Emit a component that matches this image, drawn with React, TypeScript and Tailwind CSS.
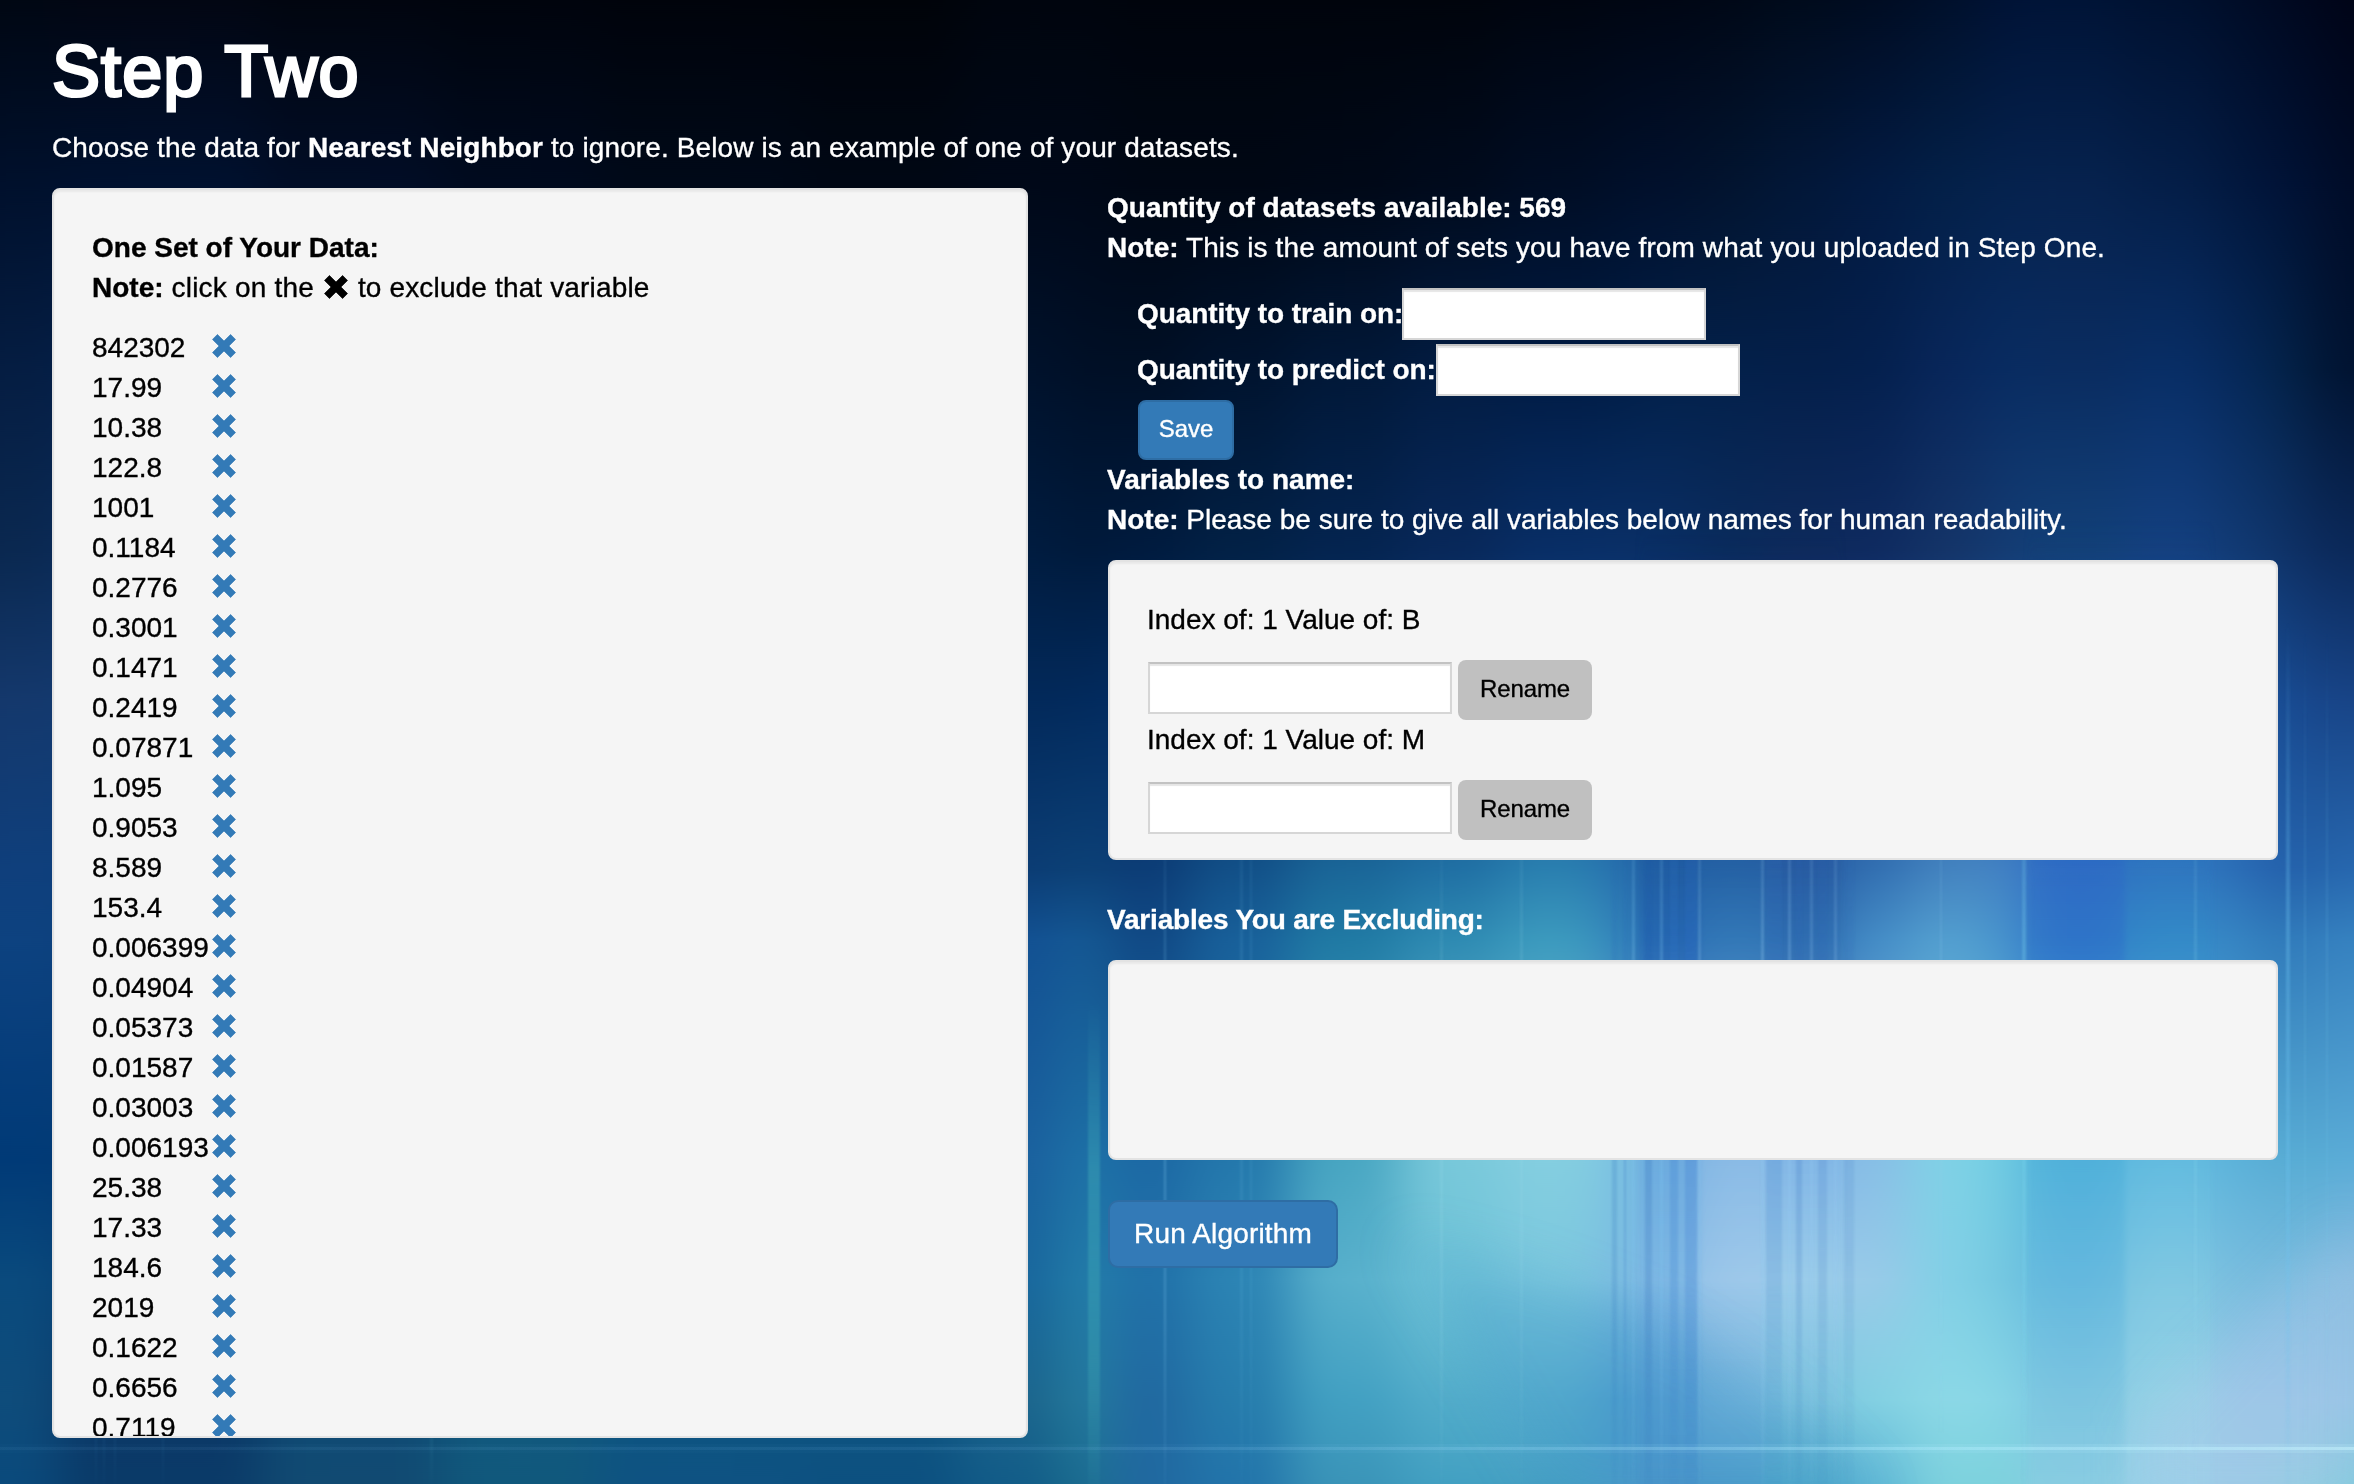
import React from "react";

const STOPS = [0, 185, 370, 550, 700, 870, 940, 1160, 1280, 1400, 1484];

// Wallpaper colour ramps: [left edge, colours from top to bottom at STOPS]
const RAMPS: [number, string[]][] = [
  [-60, ["#000713", "#00102c", "#051d42", "#0a2850", "#14386c", "#0f3f7c", "#0d4280", "#003a77", "#0a4a7d", "#0e4c7b", "#0a4a7c"]],
  [60, ["#020613", "#00112f", "#03204a", "#0a2c5c", "#123a70", "#0d3f7c", "#0c407c", "#033a74", "#073e72", "#0b3766", "#0a3a68"]],
  [260, ["#01050f", "#010d26", "#03204a", "#0a2c5c", "#123a70", "#0d3f7c", "#0c407c", "#033a74", "#0a4472", "#0e4a74", "#114a72"]],
  [440, ["#00040d", "#000a1e", "#03204a", "#0a2c5c", "#123a70", "#0d3f7c", "#0c407c", "#033a74", "#0a4c78", "#12597e", "#10587c"]],
  [600, ["#00030b", "#000918", "#021a3c", "#052552", "#0d3468", "#0d3f7c", "#0c4880", "#0a5088", "#0a5080", "#0c5480", "#0e5282"]],
  [800, ["#000309", "#000714", "#01142e", "#031e48", "#062c60", "#0d4280", "#105088", "#145a90", "#145a8c", "#0e5480", "#0c5080"]],
  [960, ["#00050e", "#000818", "#00122c", "#001c40", "#02295a", "#0b3c74", "#125092", "#1a609e", "#18669c", "#1b648c", "#125c88"]],
  [1060, ["#00050e", "#000818", "#000f26", "#00193a", "#022a5c", "#0c4277", "#155a94", "#1e74a8", "#2480aa", "#257d9f", "#1c7090"]],
  [1110, ["#00040c", "#000714", "#000f25", "#001b3f", "#032c62", "#0c3c76", "#104884", "#1c68a4", "#2070a8", "#2068a0", "#2068a0"]],
  [1190, ["#00040c", "#000714", "#00132e", "#022146", "#053264", "#125088", "#18609a", "#2478ac", "#2c84b4", "#267cac", "#2274aa"]],
  [1290, ["#00040c", "#000817", "#011838", "#042450", "#083a70", "#1a6698", "#207aa4", "#48a6c2", "#58b0cc", "#42a0c2", "#3a94b8"]],
  [1400, ["#00040c", "#000a1c", "#021c42", "#08285a", "#104480", "#2070a4", "#2e8ab2", "#78c8da", "#70c4d8", "#52acca", "#42a0c2"]],
  [1500, ["#000510", "#000d24", "#001b44", "#082e66", "#144c90", "#2a80b0", "#3c9abe", "#84cee0", "#7cc8de", "#58aece", "#46a0c4"]],
  [1600, ["#000613", "#000f2a", "#001d46", "#0a3068", "#144c94", "#2870b0", "#3484bc", "#7cc2e2", "#7cbce2", "#4c9cce", "#4c9cca"]],
  [1640, ["#000614", "#01102c", "#02204a", "#0a2e64", "#123f88", "#205ca2", "#2464b0", "#6aa8de", "#7cb6e4", "#569cd2", "#4c94ca"]],
  [1700, ["#000817", "#02142f", "#03204a", "#0a2b5c", "#16428a", "#2664a6", "#347ab8", "#8cbce6", "#9ec8ea", "#74b4dc", "#509ecc"]],
  [1764, ["#000b1c", "#021738", "#041f4a", "#0e2a5c", "#18408c", "#285ca2", "#2e6cb0", "#82b6e6", "#9accea", "#7cc2de", "#52aacc"]],
  [1840, ["#000c22", "#021a42", "#04204e", "#0e2a60", "#1a4490", "#3270b2", "#448cc6", "#88bee6", "#98cae8", "#82d0e2", "#60b8d6"]],
  [1910, ["#00102b", "#032048", "#08265a", "#143468", "#1e509a", "#4484c0", "#54a0d0", "#80d2e6", "#82d0e6", "#8cd8e6", "#7ed2de"]],
  [1980, ["#001337", "#05224e", "#082c62", "#143c74", "#2058a4", "#4484c4", "#4894cc", "#70cce2", "#74c8e0", "#86d6e6", "#7cd2dc"]],
  [2028, ["#001437", "#06224e", "#0a2c60", "#124078", "#1c5cae", "#2e6cc4", "#2e74c8", "#50b0da", "#64b8de", "#7cc4e0", "#88cce2"]],
  [2125, ["#001130", "#041e48", "#082e66", "#144080", "#1c62b4", "#3078c0", "#348ac8", "#64bce0", "#80c8e2", "#94d2e6", "#98d2e8"]],
  [2210, ["#000d28", "#02183e", "#06285a", "#113a74", "#1c58a0", "#2c70b8", "#3886c4", "#5cb2da", "#78bcde", "#94c6e6", "#98cae6"]],
  [2256, ["#000a22", "#001338", "#03244c", "#0f346a", "#184c94", "#2460ac", "#2e78b8", "#58acd4", "#78bcde", "#94c6e6", "#94cee4"]],
  [2300, ["#00061c", "#010f2e", "#021838", "#0c2a5c", "#174488", "#2464aa", "#347ebe", "#58acd4", "#78bcde", "#94c6e6", "#8ccede"]],
  [2334, ["#000416", "#000b26", "#001230", "#0a2858", "#184486", "#2868b0", "#3682c0", "#5cacd8", "#8cbee0", "#94c4e4", "#82cade"]],
];

// Fine vertical light lines: [x, width, top, opacity, colour]
const STREAKS: [number, number, number, number, string][] = [
  [1088, 12, 1000, 0.3, "#50c8c0"], [1164, 2, 800, 0.35, "#80c8f0"], [1240, 3, 700, 0.15, "#70c0e8"],
  [1250, 2, 700, 0.15, "#70c0e8"], [1440, 3, 800, 0.15, "#b0e8f4"], [1520, 3, 700, 0.12, "#b0e8f4"],
  [1612, 5, 780, 0.2, "#2868b8"], [1624, 2, 760, 0.25, "#3070c0"], [1632, 3, 700, 0.3, "#80c8f0"],
  [1645, 7, 760, 0.18, "#1850a8"], [1660, 3, 700, 0.3, "#80c8f0"], [1670, 8, 700, 0.25, "#3478cc"],
  [1685, 12, 700, 0.25, "#3070cc"], [1698, 3, 700, 0.3, "#90c8f0"], [1761, 3, 700, 0.35, "#90c8f0"],
  [1766, 16, 700, 0.2, "#3878c4"], [1788, 3, 700, 0.3, "#98ccf4"], [1796, 6, 700, 0.2, "#3068b8"],
  [1810, 3, 700, 0.25, "#98ccf4"], [1818, 9, 700, 0.15, "#3068b8"], [1834, 3, 700, 0.25, "#98ccf4"],
  [1844, 10, 700, 0.12, "#3068b8"], [1940, 2, 650, 0.15, "#a0d8f4"], [2022, 4, 650, 0.3, "#80d8f0"],
  [2194, 3, 700, 0.18, "#98e0f4"], [2286, 4, 620, 0.35, "#70c4f0"], [2304, 2, 620, 0.15, "#80d0f0"],
  [2326, 2, 620, 0.15, "#80d0f0"], [95, 2, 1200, 0.25, "#3478a8"], [103, 2, 1200, 0.25, "#3478a8"],
  [114, 2, 1200, 0.25, "#3478a8"], [162, 2, 1200, 0.25, "#3478a8"], [430, 3, 1300, 0.15, "#48a0b8"],
];

function Wallpaper() {
  return (
    <svg className="absolute inset-0 h-full w-full" viewBox="0 0 2354 1484" preserveAspectRatio="none" colorInterpolationFilters="sRGB" aria-hidden="true">
      <defs>
        {RAMPS.map(([x, colours]) => (
          <linearGradient key={x} id={`ramp${x}`} gradientUnits="userSpaceOnUse" x1="0" y1="0" x2="0" y2="1484">
            {colours.map((c, i) => <stop key={i} offset={STOPS[i] / 1484} stopColor={c} />)}
          </linearGradient>
        ))}
        {STREAKS.map(([x, , top, , c]) => (
          <linearGradient key={x} id={`streak${x}`} gradientUnits="userSpaceOnUse" x1="0" y1={top} x2="0" y2="1484">
            <stop offset="0" stopColor={c} stopOpacity="0" />
            <stop offset="0.35" stopColor={c} />
            <stop offset="0.75" stopColor={c} stopOpacity="0.8" />
            <stop offset="1" stopColor={c} stopOpacity="0.15" />
          </linearGradient>
        ))}
        <linearGradient id="horizon" x1="0" x2="1" y1="0" y2="0">
          <stop offset="0" stopColor="#80c0f0" stopOpacity="0.06" />
          <stop offset="0.45" stopColor="#80c0f0" stopOpacity="0.1" />
          <stop offset="0.8" stopColor="#b0ecff" stopOpacity="0.35" />
          <stop offset="1" stopColor="#c8f4ff" stopOpacity="0.5" />
        </linearGradient>
        <filter id="soften" filterUnits="userSpaceOnUse" x="-80" y="0" width="2600" height="1484">
          <feGaussianBlur stdDeviation="26 0" />
        </filter>
        <filter id="softenFine" filterUnits="userSpaceOnUse" x="1500" y="0" width="960" height="1484">
          <feGaussianBlur stdDeviation="3 0" />
        </filter>
        <filter id="haze" x="-50%" y="-50%" width="200%" height="200%">
          <feGaussianBlur stdDeviation="26" />
        </filter>
        <filter id="line" x="-100%" y="0" width="300%" height="100%">
          <feGaussianBlur stdDeviation="0.8 0" />
        </filter>
        <linearGradient id="fade" x1="0" y1="0" x2="0" y2="1">
          <stop offset="0.35" stopColor="#000" />
          <stop offset="0.6" stopColor="#fff" />
        </linearGradient>
        <mask id="lower" maskUnits="userSpaceOnUse" x="0" y="0" width="2354" height="1484">
          <rect width="2354" height="1484" fill="url(#fade)" />
        </mask>
      </defs>
      <g filter="url(#soften)">
        {RAMPS.map(([x], i) => (
          <rect key={x} x={x} y="0" width={(RAMPS[i + 1]?.[0] ?? 2460) - x + 1} height="1484" fill={`url(#ramp${x})`} />
        ))}
      </g>
      <g mask="url(#lower)">
        <g filter="url(#softenFine)" opacity="0.5">
          {RAMPS.map(([x], i) =>
            [1640, 1700, 1764, 2028, 2125].includes(x) ? (
              <rect key={x} x={x} y="0" width={RAMPS[i + 1][0] - x + 1} height="1484" fill={`url(#ramp${x})`} />
            ) : null,
          )}
        </g>
      </g>
      <g filter="url(#haze)">
        <path d="M1400 1240 Q1660 1300 1780 1400 L1880 1500 L1560 1500 Z" fill="#3c94c8" opacity="0.25" />
        <path d="M2140 1500 L2140 1430 L2354 1220 L2354 1500 Z" fill="#b4c8ec" opacity="0.3" />
      </g>
      {STREAKS.map(([x, w, top, o]) => (
        <rect key={x} x={x} y={top} width={w} height={1484 - top} fill={`url(#streak${x})`} opacity={o} filter="url(#line)" />
      ))}
      <rect x="0" y="1447" width="2354" height="3" fill="url(#horizon)" />
      <rect x="0" y="1444" width="2354" height="9" fill="url(#horizon)" opacity="0.35" />
    </svg>
  );
}

function Cross({ className }: { className: string }) {
  return (
    <svg viewBox="0.3 0.3 23.4 23.4" className={className} fill="currentColor" stroke="currentColor" strokeWidth="0.7" strokeLinejoin="round" aria-hidden="true">
      <path d="M5.6 .8 12 7.2 18.4 .8 23.2 5.6 16.8 12 23.2 18.4 18.4 23.2 12 16.8 5.6 23.2 .8 18.4 7.2 12 .8 5.6Z" />
    </svg>
  );
}

const VALUES = [
  "842302", "17.99", "10.38", "122.8", "1001", "0.1184", "0.2776", "0.3001", "0.1471", "0.2419",
  "0.07871", "1.095", "0.9053", "8.589", "153.4", "0.006399", "0.04904", "0.05373", "0.01587",
  "0.03003", "0.006193", "25.38", "17.33", "184.6", "2019", "0.1622", "0.6656", "0.7119",
];

const WELL = "rounded-lg border-2 border-[#e3e3e3] bg-[#f5f5f5] px-[38px] pt-[38px] text-black shadow-[inset_0_2px_2px_rgba(0,0,0,0.05)]";
const FIELD = "block h-[52px] w-[304px] shrink-0 border-2 border-[#d6d6d6] border-t-[#c2c2c2] bg-white px-1 text-black shadow-[inset_0_2px_1px_rgba(0,0,0,0.1)] outline-none";

function RenameRow({ value }: { value: string }) {
  return (
    <div>
      <p className="mb-5 -ml-px">Index of: 1 Value of: {value}</p>
      <div className="flex h-[60px] items-start gap-1.5">
        <input className={`${FIELD} mt-0.5`} />
        <button className="h-[60px] w-[134px] rounded-lg bg-[#c0c0c0] pb-0.5 text-[24px] tracking-[-0.1px]">Rename</button>
      </div>
    </div>
  );
}

export default function App() {
  return (
    <div className="relative h-[1484px] w-[2354px] overflow-hidden bg-[#000b1c] font-['Liberation_Sans',Arial,sans-serif] text-[28px] leading-[40px] text-white [-webkit-text-stroke:0.35px_currentColor]">
      <Wallpaper />
      <main className="relative pl-[52px]">
        <h1 className="pt-[31px] text-[72px] leading-[80px] tracking-[1.1px] [-webkit-text-stroke:3px_white]">Step Two</h1>
        <p className="mt-[17px] mb-5 whitespace-nowrap tracking-[0.11px]">
          Choose the data for <b>Nearest Neighbor</b> to ignore. Below is an example of one of your datasets.
        </p>
        <div className="flex items-start">
          <section className={`${WELL} h-[1250px] w-[976px] overflow-hidden`}>
            <p className="font-bold">One Set of Your Data:</p>
            <p className="mb-5 flex items-start whitespace-pre">
              <b>Note:</b><span className="tracking-[0.2px]"> click on the </span><Cross className="mt-[7px] mr-0.5 ml-0.5 h-6 w-6" /><span className="tracking-[0.15px]"> to exclude that variable</span>
            </p>
            <ul>
              {VALUES.map((v) => (
                <li key={v} className="flex h-10">
                  <span className="w-[120px]">{v}</span>
                  <Cross className="mt-1.5 h-6 w-6 text-[#337ab7]" />
                </li>
              ))}
            </ul>
          </section>
          <section className="ml-[79px] flex flex-col whitespace-nowrap">
            <p className="font-bold">Quantity of datasets available: 569</p>
            <p className="mb-5"><b>Note:</b><span className="tracking-[0.12px]"> This is the amount of sets you have from what you uploaded in Step One.</span></p>
            <form className="flex flex-col gap-1 pl-[31px]">
              <label className="-ml-px flex items-center font-bold tracking-[-0.06px]">
                <span className="w-[265px]">Quantity to train on:</span>
                <input className={FIELD} />
              </label>
              <label className="-ml-px flex items-center font-bold tracking-[-0.06px]">
                <span className="w-[299px]">Quantity to predict on:</span>
                <input className={FIELD} />
              </label>
              <button type="button" className="h-[60px] w-24 rounded-lg border-2 border-[#2e6da4] bg-[#337ab7] pb-0.5 text-[24px]">Save</button>
            </form>
            <p className="font-bold">Variables to name:</p>
            <p className="mb-5"><b>Note:</b> Please be sure to give all variables below names for human readability.</p>
            <div className={`${WELL} ml-px h-[300px] w-[1170px]`}>
              <RenameRow value="B" />
              <RenameRow value="M" />
            </div>
            <p className="my-10 mb-5 font-bold tracking-[-0.18px]">Variables You are Excluding:</p>
            <div className={`${WELL} ml-px h-[200px] w-[1170px]`} />
            <button className="mt-10 ml-px h-[68px] w-[230px] rounded-[10px] border-2 border-[#2e6da4] bg-[#337ab7] tracking-[0.15px]">Run Algorithm</button>
          </section>
        </div>
      </main>
    </div>
  );
}
